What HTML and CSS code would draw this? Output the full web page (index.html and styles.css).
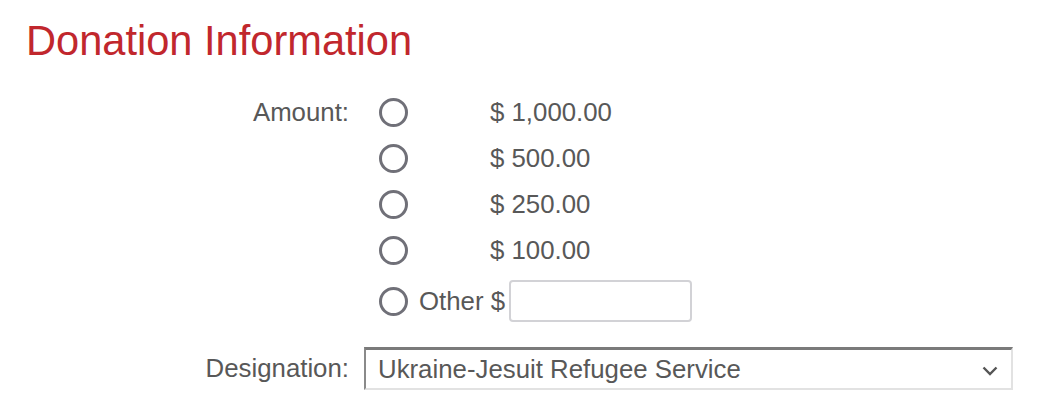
FILE: index.html
```html
<!DOCTYPE html>
<html lang="en">
<head>
<meta charset="utf-8">
<title>Donation Information</title>
<link rel="stylesheet" href="styles.css">
</head>
<body>
<h1 class="title">Donation Information</h1>
<form class="form">
  <div class="label label-top">Amount:</div>
  <div class="options">
    <label class="option"><input class="radio" type="radio" name="amt"><span class="amount">$ 1,000.00</span></label>
    <label class="option"><input class="radio" type="radio" name="amt"><span class="amount">$ 500.00</span></label>
    <label class="option"><input class="radio" type="radio" name="amt"><span class="amount">$ 250.00</span></label>
    <label class="option"><input class="radio" type="radio" name="amt"><span class="amount">$ 100.00</span></label>
    <label class="option option-other"><input class="radio" type="radio" name="amt"><span class="other">Other $</span><input class="other-input" type="text"></label>
  </div>
  <div class="label label-desig">Designation:</div>
  <div class="select-wrap">
    <select class="select">
      <option>Ukraine-Jesuit Refugee Service</option>
    </select>
    <svg class="chevron" width="16" height="10" viewBox="0 0 16 10"><path d="M1.5 1.5 L8 8 L14.5 1.5" fill="none" stroke="#555" stroke-width="2.4"/></svg>
  </div>
</form>
</body>
</html>
```
FILE: styles.css
```css
html, body {
  margin: 0;
  padding: 0;
  background: #fff;
}
body {
  font-family: "Liberation Sans", Arial, sans-serif;
  color: #585858;
}
.title {
  margin: 17px 0 24px 26px;
  font-size: 41.6px;
  line-height: 48px;
  font-weight: normal;
  color: #c1272d;
}
.form {
  display: grid;
  grid-template-columns: 349px 1fr;
  column-gap: 0;
  font-size: 25.8px;
}
.label {
  text-align: right;
  line-height: 46px;
}
.options {
  display: flex;
  flex-direction: column;
  padding-left: 30px;
}
.option {
  display: flex;
  align-items: center;
  height: 46px;
}
.radio {
  appearance: none;
  -webkit-appearance: none;
  width: 29px;
  height: 29px;
  margin: 0;
  border: 3px solid #707078;
  border-radius: 50%;
  background: #fff;
  flex: none;
}
.amount {
  margin-left: 82px;
}
.option-other {
  margin-top: 5px;
}
.other {
  margin-left: 11px;
}
.other-input {
  width: 183px;
  height: 42px;
  box-sizing: border-box;
  margin: 0 0 0 4px;
  border: 2px solid #d2d2d6;
  border-radius: 4px;
  background: #fff;
  font: inherit;
}
.label-desig {
  margin-top: 23px;
  line-height: 43px;
}
.select-wrap {
  position: relative;
  margin-top: 23px;
  margin-left: 15px;
  width: 649px;
  height: 43px;
}
.select {
  appearance: none;
  -webkit-appearance: none;
  width: 100%;
  height: 100%;
  box-sizing: border-box;
  margin: 0;
  padding: 0 40px 0 12px;
  border-style: solid;
  border-width: 3px 2px 2px 2px;
  border-color: #7a7a7a #e2e2e2 #e2e2e2 #8a8a8a;
  border-radius: 0;
  background: #fff;
  font: inherit;
  color: #585858;
}
.chevron {
  position: absolute;
  right: 15px;
  top: 19px;
}
```
